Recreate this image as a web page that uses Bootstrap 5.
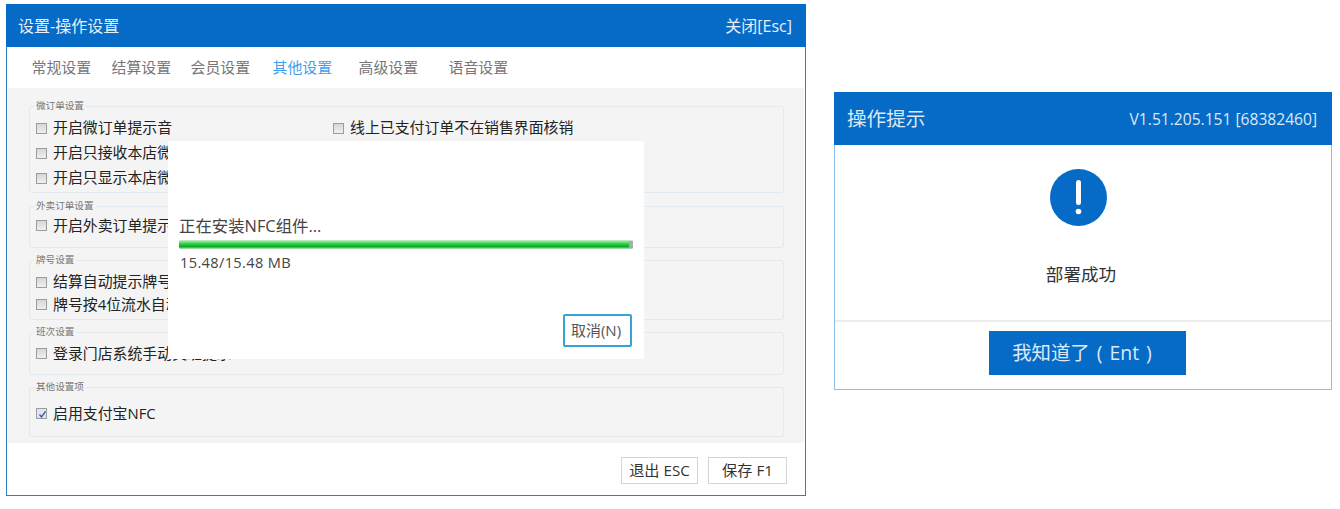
<!DOCTYPE html>
<html lang="zh-CN">
<head>
<meta charset="utf-8">
<title>设置-操作设置</title>
<link href="https://cdn.jsdelivr.net/npm/bootstrap@5.3.0/dist/css/bootstrap.min.css" rel="stylesheet">
<style>
html,body{height:100%;background:#fff}
body{font-family:"Open Sans","Noto Sans CJK SC",sans-serif;color:#222;font-size:15px;line-height:1.2;overflow:hidden}
.stage{padding:4px 0 0 6px;align-items:flex-start;gap:28px}
.win-a{position:relative;width:800px;height:492px;border:1px solid #2f7fc1;background:#fff}
.bar-a{height:43px;margin:-1px -1px 0;background:#066bc6;color:#e6f0fa;padding:2px 14px 0 12px;font-size:16px}
.tabs-a{height:41px;padding-left:24.5px;font-size:14.9px;color:#777}
.tabs-a span{white-space:nowrap}
.t1{width:80px}.t2{width:79px}.t3{width:82px}.t4{width:86px}.t5{width:90px}
.tab-on{color:#3fa1ee}
.pane{margin:0 1px;height:355px;background:#f4f4f4;padding:12px 21px 0 21px}
.grp{border:1px solid #e2e9ef;border-radius:3px;padding:0 0 0 6px;width:755px;min-width:0}
.grp legend{float:none;width:auto;margin:0 0 0 -2px;padding:0 2px;font-size:9.6px;line-height:12px;color:#777}
.g1{height:93px;margin:0 0 7px;padding-top:3.5px}
.g2{height:48px;margin:0 0 6px;padding-top:1px}
.g3{height:66px;margin:0 0 6px;padding-top:5px}
.g4{height:49px;margin:0 0 6px;padding-top:3px}
.g5{height:56px;margin:0;padding-top:8px}
.opt{height:25px;font-size:14.9px;white-space:nowrap;color:#222}
.g3 .opt{height:22.5px}
.opt .form-check-input{width:11px;height:11px;margin:0 6px 0 0;flex:none;border:1px solid #9c9c9c;border-radius:0;background:linear-gradient(#d6d6d6,#f0f0f0)}
.opt .form-check-input:checked{background-color:#dfe6f3;background-image:url("data:image/svg+xml,%3Csvg xmlns='http://www.w3.org/2000/svg' viewBox='0 0 11 11'%3E%3Cpath d='M2.5 5.5l2 2.5 4-5.5' fill='none' stroke='%233f5fa8' stroke-width='1.4'/%3E%3C/svg%3E");background-size:11px 11px}
.col-left{width:297px}
.foot-a{height:52px;padding:14px 18px 0 0;gap:10px}
.btn-a{--bs-btn-padding-y:0;--bs-btn-padding-x:0;--bs-btn-font-size:15.2px;--bs-btn-border-radius:0;--bs-btn-border-color:#d4d4d4;--bs-btn-color:#333;height:27px;line-height:25px;background:#fff}
.w78{width:77px}.w79{width:79px}
.dlg{position:absolute;left:161px;top:136px;width:476px;height:218px;background:#fff;padding:74px 11px 0 11px}
.dlg-title{font-size:16.4px;line-height:21px;color:#444}
.prog{--bs-progress-height:9px;--bs-progress-border-radius:2px;--bs-progress-bg:#cfcfcf;margin:4px 0 0;position:relative;width:454px}
.prog .progress-bar{background:linear-gradient(#cdeccf 0,#23cf3c 45%,#0fa52a 75%,#bfe6c2 100%)}
.prog-cap{position:absolute;right:0;top:1px;width:4px;height:7px;background:#aaa}
.dlg-size{margin-top:3px;padding-left:1px;font-size:14.6px;line-height:20px;color:#444;letter-spacing:.35px}
.dlg-foot{position:absolute;right:12px;bottom:12px}
.btn-c{--bs-btn-padding-y:0;--bs-btn-padding-x:0;--bs-btn-font-size:15px;--bs-btn-border-radius:2px;--bs-btn-border-width:2px;--bs-btn-border-color:#35a3d6;--bs-btn-color:#555;width:69px;height:33px;line-height:29px;background:#fff;padding-right:3px}
.win-b{margin-top:88px;width:498px;height:298px;border:1px solid #8dbdea;background:#fff}
.bar-b{height:53px;margin:-1px -1px 0;padding:1px 15px 0 13px;background:#066bc6;color:#dbe8f5}
.bar-b-t{font-size:19.6px}
.bar-b-v{font-size:15.6px}
.msg{height:177px;padding:24px 10px 0 0;border-bottom:2px solid #ededed}
.msg svg{display:block}
.msg-t{margin-top:36px;font-size:17.6px;line-height:24px;color:#333;padding-left:6px}
.foot-b{padding-top:9px}
.btn-b{--bs-btn-padding-y:0;--bs-btn-padding-x:0;--bs-btn-font-size:19.4px;--bs-btn-border-radius:0;--bs-btn-border-width:0;--bs-btn-bg:#066bc6;--bs-btn-color:#dce9f6;width:197px;height:44px;line-height:44px;margin-left:9px;word-spacing:2px;padding-right:11px}
</style>
</head>
<body>
<div class="stage d-flex">
  <section class="win-a">
    <header class="bar-a d-flex justify-content-between align-items-center">
      <span>设置-操作设置</span><span>关闭[Esc]</span>
    </header>
    <nav class="tabs-a d-flex align-items-center">
      <span class="t1">常规设置</span><span class="t2">结算设置</span><span class="t3">会员设置</span><span class="t4 tab-on">其他设置</span><span class="t5">高级设置</span><span>语音设置</span>
    </nav>
    <div class="pane">
      <fieldset class="grp g1">
        <legend>微订单设置</legend>
        <div class="d-flex">
          <label class="opt d-flex align-items-center col-left"><input class="form-check-input" type="checkbox">开启微订单提示音</label>
          <label class="opt d-flex align-items-center"><input class="form-check-input" type="checkbox">线上已支付订单不在销售界面核销</label>
        </div>
        <label class="opt d-flex align-items-center"><input class="form-check-input" type="checkbox">开启只接收本店微订单</label>
        <label class="opt d-flex align-items-center"><input class="form-check-input" type="checkbox">开启只显示本店微订单</label>
      </fieldset>
      <fieldset class="grp g2">
        <legend>外卖订单设置</legend>
        <label class="opt d-flex align-items-center"><input class="form-check-input" type="checkbox">开启外卖订单提示音</label>
      </fieldset>
      <fieldset class="grp g3">
        <legend>牌号设置</legend>
        <label class="opt d-flex align-items-center"><input class="form-check-input" type="checkbox">结算自动提示牌号</label>
        <label class="opt d-flex align-items-center"><input class="form-check-input" type="checkbox">牌号按4位流水自动生成</label>
      </fieldset>
      <fieldset class="grp g4">
        <legend>班次设置</legend>
        <label class="opt d-flex align-items-center"><input class="form-check-input" type="checkbox">登录门店系统手动交班提示</label>
      </fieldset>
      <fieldset class="grp g5">
        <legend>其他设置项</legend>
        <label class="opt d-flex align-items-center"><input class="form-check-input" type="checkbox" checked>启用支付宝NFC</label>
      </fieldset>
    </div>
    <footer class="foot-a d-flex justify-content-end align-items-start">
      <button type="button" class="btn btn-a w78">退出 ESC</button>
      <button type="button" class="btn btn-a w79">保存 F1</button>
    </footer>
    <div class="dlg">
      <div class="dlg-title">正在安装NFC组件...</div>
      <div class="progress prog"><div class="progress-bar" style="width:100%"></div><i class="prog-cap"></i></div>
      <div class="dlg-size">15.48/15.48 MB</div>
      <div class="dlg-foot"><button type="button" class="btn btn-c">取消(N)</button></div>
    </div>
  </section>
  <section class="win-b">
    <header class="bar-b d-flex justify-content-between align-items-center">
      <span class="bar-b-t">操作提示</span><span class="bar-b-v">V1.51.205.151 [68382460]</span>
    </header>
    <div class="msg d-flex flex-column align-items-center">
      <svg width="57" height="57" viewBox="0 0 57 57" aria-hidden="true"><circle cx="28.5" cy="28.5" r="28.5" fill="#066bc6"/><rect x="26" y="11" width="5" height="25" rx="2.5" fill="#fff"/><circle cx="28.5" cy="42.5" r="2.8" fill="#fff"/></svg>
      <div class="msg-t">部署成功</div>
    </div>
    <div class="foot-b d-flex justify-content-center">
      <button type="button" class="btn btn-b">我知道了 ( Ent )</button>
    </div>
  </section>
</div>
<script src="https://cdn.jsdelivr.net/npm/bootstrap@5.3.0/dist/js/bootstrap.bundle.min.js"></script>
</body>
</html>
